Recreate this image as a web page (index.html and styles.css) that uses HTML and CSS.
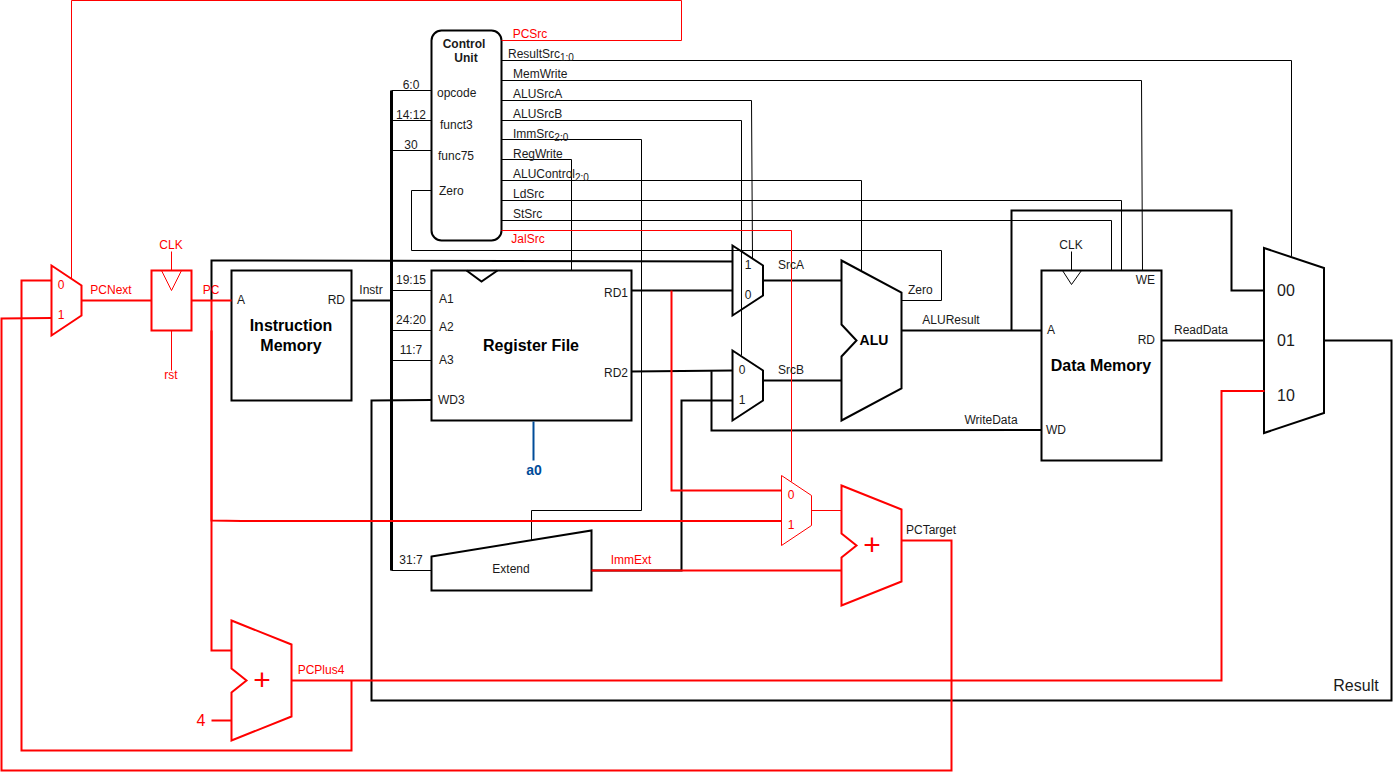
FILE: index.html
```html
<!DOCTYPE html>
<html lang="en">
<head>
<meta charset="utf-8">
<title>Single-cycle RISC-V datapath</title>
<link rel="stylesheet" href="styles.css">
</head>
<body>
<main class="page">
<svg class="diagram" viewBox="0 0 1394 773" role="img" aria-label="Processor datapath diagram">
  <g transform="translate(0.5 0.5)">
    <!-- control signals -->
    <g class="wire thin">
      <path d="M501 60H1291V256"/>
      <path d="M501 80H1141L1142 270"/>
      <path d="M501 100H751L752 258"/>
      <path d="M501 120H741V355"/>
      <path d="M501 139H641V510H531V540"/>
      <path d="M501 159H571V270"/>
      <path d="M501 180H861V271"/>
      <path d="M501 200H1121V270"/>
      <path d="M501 220H1111V270"/>
      <path d="M431 190H411V250H941V300H901"/>
      <path d="M391 90H431M391 120H431M391 150H431M391 290H431M391 330H431M391 360H431M391 570H431"/>
      <path d="M1071 251V270M1062 270L1071 284L1081 270"/>
    </g>

    <!-- data buses -->
    <g class="wire">
      <path d="M211 300V260L732 261"/>
      <path d="M351 300H391"/>
      <path d="M631 290H732"/>
      <path d="M631 371L732 370M711 370V430L1041 429.5"/>
      <path d="M591 570H681V400H732"/>
      <path d="M762 280H841M762 380H841"/>
      <path d="M901 330H1041M1011 330V210H1231V290H1264"/>
      <path d="M1161 340H1264"/>
      <path d="M1324 340H1391V700H371V400L431 399.5"/>
    </g>
    <path class="wire bus" d="M391 90V570"/>

    <!-- components -->
    <g class="wire">
      <rect x="431" y="30" width="70" height="210" rx="10"/>
      <rect x="231" y="270" width="120" height="130"/>
      <rect x="431" y="270" width="200" height="150"/>
      <path d="M466 270L481 281L497 270"/>
      <rect x="1041" y="270" width="120" height="190"/>
      <path d="M732 245L762.5 265V295L732 315Z"/>
      <path d="M732 350L762.5 370V400L732 420Z"/>
      <path d="M841 260L901 292V388L841 420V356L856 340L841 324Z"/>
      <path d="M1263.5 247.5L1323.5 267.5V412.5L1263.5 432.5Z"/>
      <path d="M431 556L591 530V590H431Z"/>
    </g>

    <!-- program counter path -->
    <g class="wire red">
      <path d="M81 300H151M191 300H231"/>
      <path d="M211 300V650H231M211 720H231"/>
      <path d="M211 330V520L241 520.5H781"/>
      <path d="M671 290V490H781"/>
      <path d="M591 570H841"/>
      <path d="M901 540H951V770H1V318L51 317.5"/>
      <path d="M291 680H1221V390.5H1264"/>
      <path d="M351 680V750H21V280H51"/>
      <path d="M51 265L81 285V315L51 335Z"/>
      <rect x="151" y="270" width="40" height="60"/>
      <path d="M231 620L291 644V716L231 740V692L246 680L231 668Z"/>
      <path d="M841 485L901 509V581L841 605V557L856 545L841 533Z"/>
    </g>
    <g class="wire thin red">
      <path d="M501 40H681V0H71V278"/>
      <path d="M501 230H791V481"/>
      <path d="M171 251V270M171 330V370M161 270L171 290L181 270"/>
      <path d="M781 475L811 495V525L781 545ZM811 510H841"/>
    </g>
    <path class="wire blue" d="M533 421V460"/>
  </g>

  <g class="label">
    <text x="508" y="58">ResultSrc<tspan class="sub" dy="3">1:0</tspan></text>
    <text x="513" y="78">MemWrite</text>
    <text x="513" y="98">ALUSrcA</text>
    <text x="513" y="118">ALUSrcB</text>
    <text x="513" y="138">ImmSrc<tspan class="sub" dy="3">2:0</tspan></text>
    <text x="513" y="158">RegWrite</text>
    <text x="513" y="178">ALUControl<tspan class="sub" dy="3">2:0</tspan></text>
    <text x="513" y="198">LdSrc</text>
    <text x="513" y="218">StSrc</text>
    <text x="437" y="97">opcode</text>
    <text x="440" y="129">funct3</text>
    <text x="438" y="160">func75</text>
    <text x="439" y="195">Zero</text>
    <text x="439" y="303">A1</text>
    <text x="439" y="331">A2</text>
    <text x="439" y="364">A3</text>
    <text x="438" y="404">WD3</text>
    <text x="237" y="304">A</text>
    <text x="1047" y="334">A</text>
    <text x="1046" y="434">WD</text>
    <text x="908" y="294">Zero</text>
    <text x="906" y="534">PCTarget</text>
  </g>
  <g class="label end">
    <text x="345" y="304">RD</text>
    <text x="628" y="297">RD1</text>
    <text x="628" y="377">RD2</text>
    <text x="1155" y="284">WE</text>
    <text x="1155" y="344">RD</text>
  </g>
  <g class="label mid">
    <text x="411" y="89">6:0</text>
    <text x="411" y="119">14:12</text>
    <text x="411" y="149">30</text>
    <text x="411" y="284">19:15</text>
    <text x="411" y="324">24:20</text>
    <text x="411" y="354">11:7</text>
    <text x="411" y="564">31:7</text>
    <text x="371" y="294">Instr</text>
    <text x="511" y="573">Extend</text>
    <text x="791" y="269">SrcA</text>
    <text x="791" y="374">SrcB</text>
    <text x="951" y="324">ALUResult</text>
    <text x="991" y="424">WriteData</text>
    <text x="1201" y="334">ReadData</text>
    <text x="1071" y="249">CLK</text>
    <text x="748" y="269">1</text>
    <text x="748" y="299">0</text>
    <text x="742" y="374">0</text>
    <text x="742" y="404">1</text>
  </g>
  <g class="label mid red-text">
    <text x="530" y="38">PCSrc</text>
    <text x="528" y="243">JalSrc</text>
    <text x="171" y="249">CLK</text>
    <text x="171" y="379">rst</text>
    <text x="111" y="294">PCNext</text>
    <text x="211" y="294">PC</text>
    <text x="61" y="289">0</text>
    <text x="61" y="319">1</text>
    <text x="791" y="499">0</text>
    <text x="791" y="529">1</text>
    <text x="631" y="564">ImmExt</text>
    <text x="321" y="674">PCPlus4</text>
  </g>
  <g class="label mid bold">
    <text x="464" y="48">Control</text>
    <text x="466" y="62">Unit</text>
  </g>
  <g class="title mid bold">
    <text x="291" y="331">Instruction</text>
    <text x="291" y="351">Memory</text>
    <text x="531" y="351">Register File</text>
    <text x="1101" y="371">Data Memory</text>
  </g>
  <g class="name mid bold">
    <text x="874" y="345">ALU</text>
    <text x="534" y="475" class="blue-text">a0</text>
  </g>
  <g class="title mid soft">
    <text x="1286" y="296">00</text>
    <text x="1286" y="346">01</text>
    <text x="1286" y="401">10</text>
    <text x="1356" y="691">Result</text>
    <text x="201" y="726" class="red-text">4</text>
  </g>
  <g class="plus mid red-text">
    <text x="262" y="690">+</text>
    <text x="872" y="555">+</text>
  </g>
</svg>
</main>
</body>
</html>
```
FILE: styles.css
```css
body {
  margin: 0;
  background: #fff;
  font-family: "Liberation Sans", Arial, sans-serif;
}
.page { width: 100%; }
.diagram {
  display: block;
  width: 100%;
  height: auto;
  fill: #000;
}
.wire {
  fill: none;
  stroke: #000;
  stroke-width: 2px;
  stroke-miterlimit: 10;
}
.thin { stroke-width: 1px; }
.bus { stroke-width: 3px; }
.red { stroke: #f00; }
.blue { stroke: #004c99; }
.label { font-size: 12px; fill: #1a1a1a; }
.sub { font-size: 10px; }
.name { font-size: 14px; }
.title { font-size: 16px; }
.plus { font-size: 30px; }
.mid { text-anchor: middle; }
.end { text-anchor: end; }
.bold { font-weight: bold; }
.soft { fill: #1a1a1a; }
.red-text { fill: #f00; }
.blue-text { fill: #004c99; }
```
